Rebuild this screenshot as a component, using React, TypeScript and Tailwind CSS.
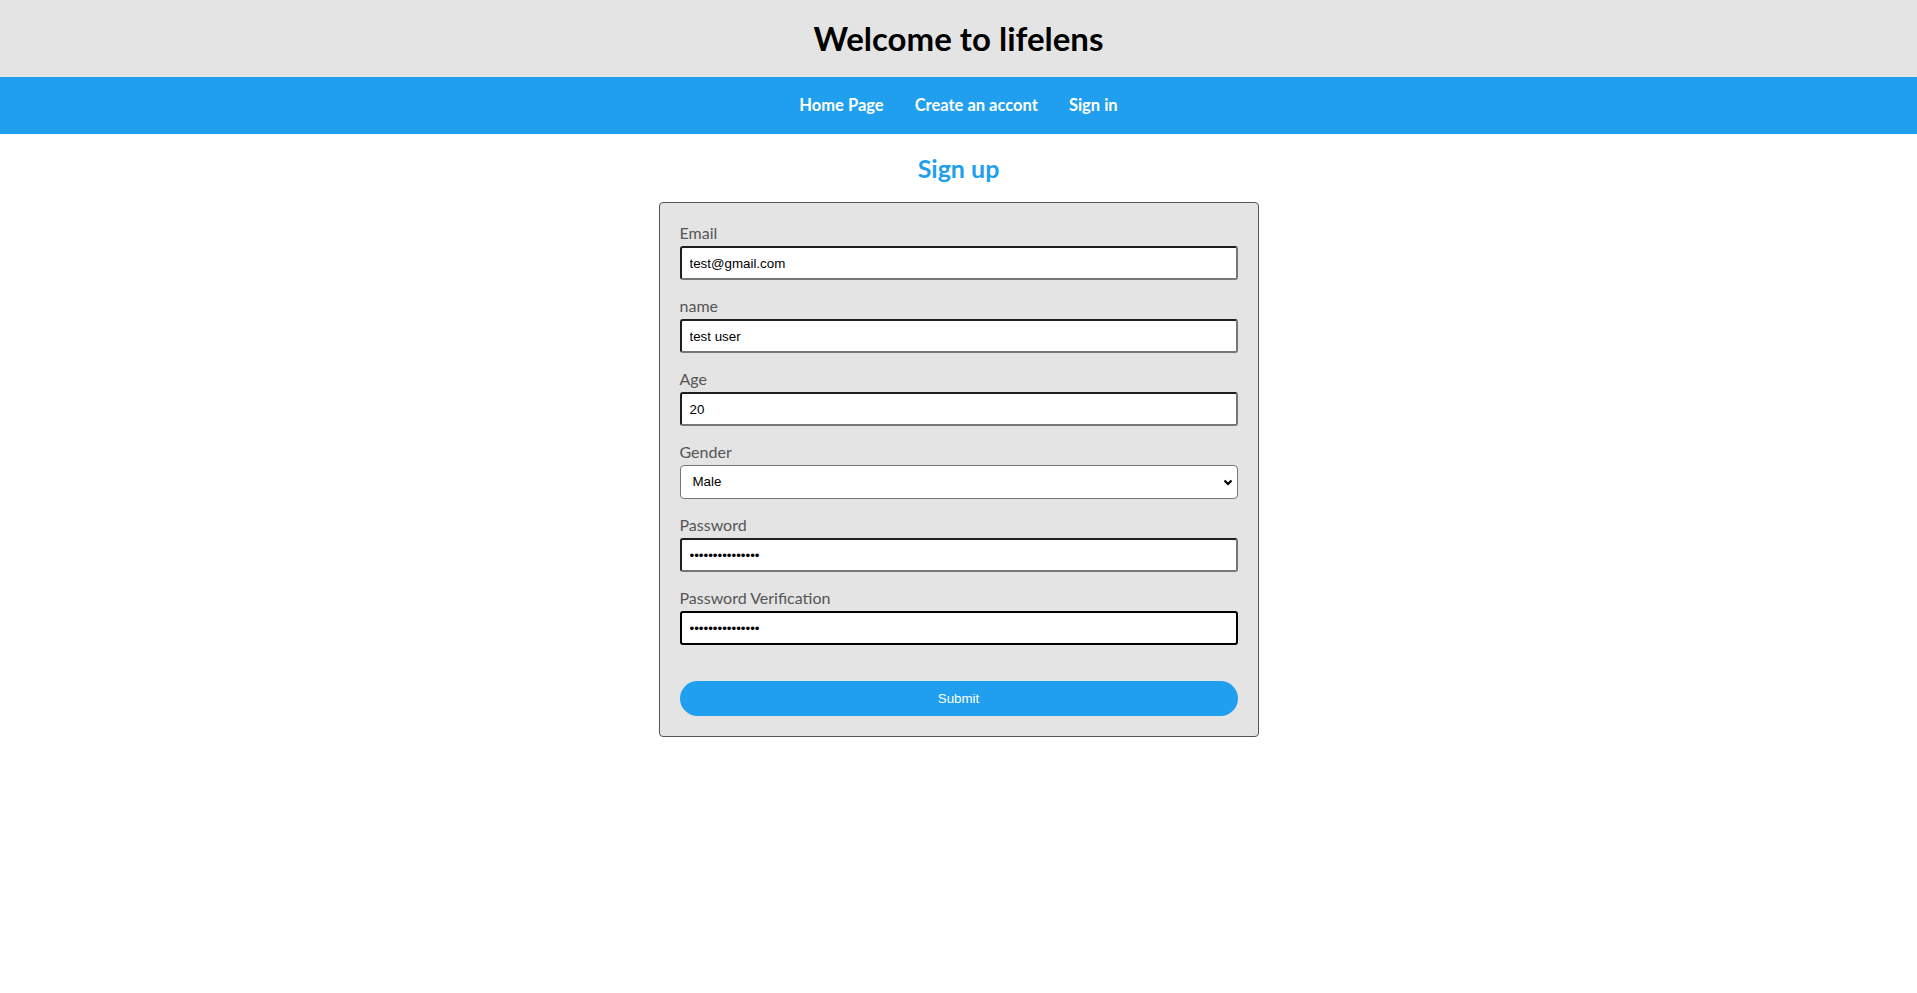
import React from 'react'

const heading = { fontFamily: 'Lato, "Open Sans", sans-serif' }
const control = { fontFamily: '"Liberation Sans", Arial, sans-serif' }

type Field = {
  label: string
  type: 'text' | 'email' | 'number' | 'password' | 'select'
  value: string
  focused?: boolean
}

const fields: Field[] = [
  { label: 'Email', type: 'email', value: 'test@gmail.com' },
  { label: 'name', type: 'text', value: 'test user' },
  { label: 'Age', type: 'text', value: '20' },
  { label: 'Gender', type: 'select', value: 'Male' },
  { label: 'Password', type: 'password', value: 'testpassword123' },
  { label: 'Password Verification', type: 'password', value: 'testpassword123', focused: true },
]

function FormField({ field }: { field: Field }) {
  if (field.type === 'select') {
    return (
      <div className="mb-[16px]">
        <label className="block text-[16px] leading-[19px] mb-[4px] text-[#555]" style={heading}>
          {field.label}
        </label>
        <div className="relative">
          <select
            defaultValue={field.value}
            className="block w-full h-[34px] appearance-none bg-white border border-[#767676] rounded-[4px] pl-[12px] text-[13.333px] text-black"
            style={control}
          >
            <option>Male</option>
            <option>Female</option>
          </select>
          <svg
            className="absolute right-[5px] top-[14px] pointer-events-none"
            width="10"
            height="7"
            viewBox="0 0 10 7"
          >
            <path d="M1.5 1.5l3.5 3.5 3.5-3.5" fill="none" stroke="#000" strokeWidth="2.2" />
          </svg>
        </div>
      </div>
    )
  }

  const borders = field.focused
    ? 'border-black'
    : 'border-t-[#1e1e1e] border-l-[#1e1e1e] border-r-[#767676] border-b-[#767676]'

  return (
    <div className="mb-[16px]">
      <label className="block text-[16px] leading-[19px] mb-[4px] text-[#555]" style={heading}>
        {field.label}
      </label>
      <input
        type={field.type}
        defaultValue={field.value}
        readOnly
        className={`block w-full h-[34px] bg-white border-2 rounded-[3px] px-[8px] text-[13.333px] text-black outline-none ${borders}`}
        style={control}
      />
    </div>
  )
}

export default function App() {
  return (
    <div className="min-h-screen bg-white">
      <header className="h-[77px] bg-[#e4e4e4] flex items-center justify-center">
        <h1 className="text-[33px] font-bold text-black" style={heading}>
          Welcome to lifelens
        </h1>
      </header>

      <nav className="h-[57px] bg-[#1f9fee] flex items-center justify-center gap-[31px]">
        {['Home Page', 'Create an accont', 'Sign in'].map((item) => (
          <a key={item} href="#" className="text-[16.5px] font-bold text-white" style={heading}>
            {item}
          </a>
        ))}
      </nav>

      <h2
        className="mt-[20px] mb-[19px] text-center text-[25px] leading-[29px] font-bold text-[#1f9fee]"
        style={heading}
      >
        Sign up
      </h2>

      <form className="w-[600px] mx-auto bg-[#e4e4e4] border border-[#555] rounded-[4px] p-[20px]">
        {fields.map((f) => (
          <FormField key={f.label} field={f} />
        ))}
        {/* sibling margins collapse, so the full gap goes here */}
        <button
          type="button"
          className="mt-[36px] block w-full h-[35px] rounded-full bg-[#1f9fee] text-white text-[13.333px]"
          style={control}
        >
          Submit
        </button>
      </form>
    </div>
  )
}
